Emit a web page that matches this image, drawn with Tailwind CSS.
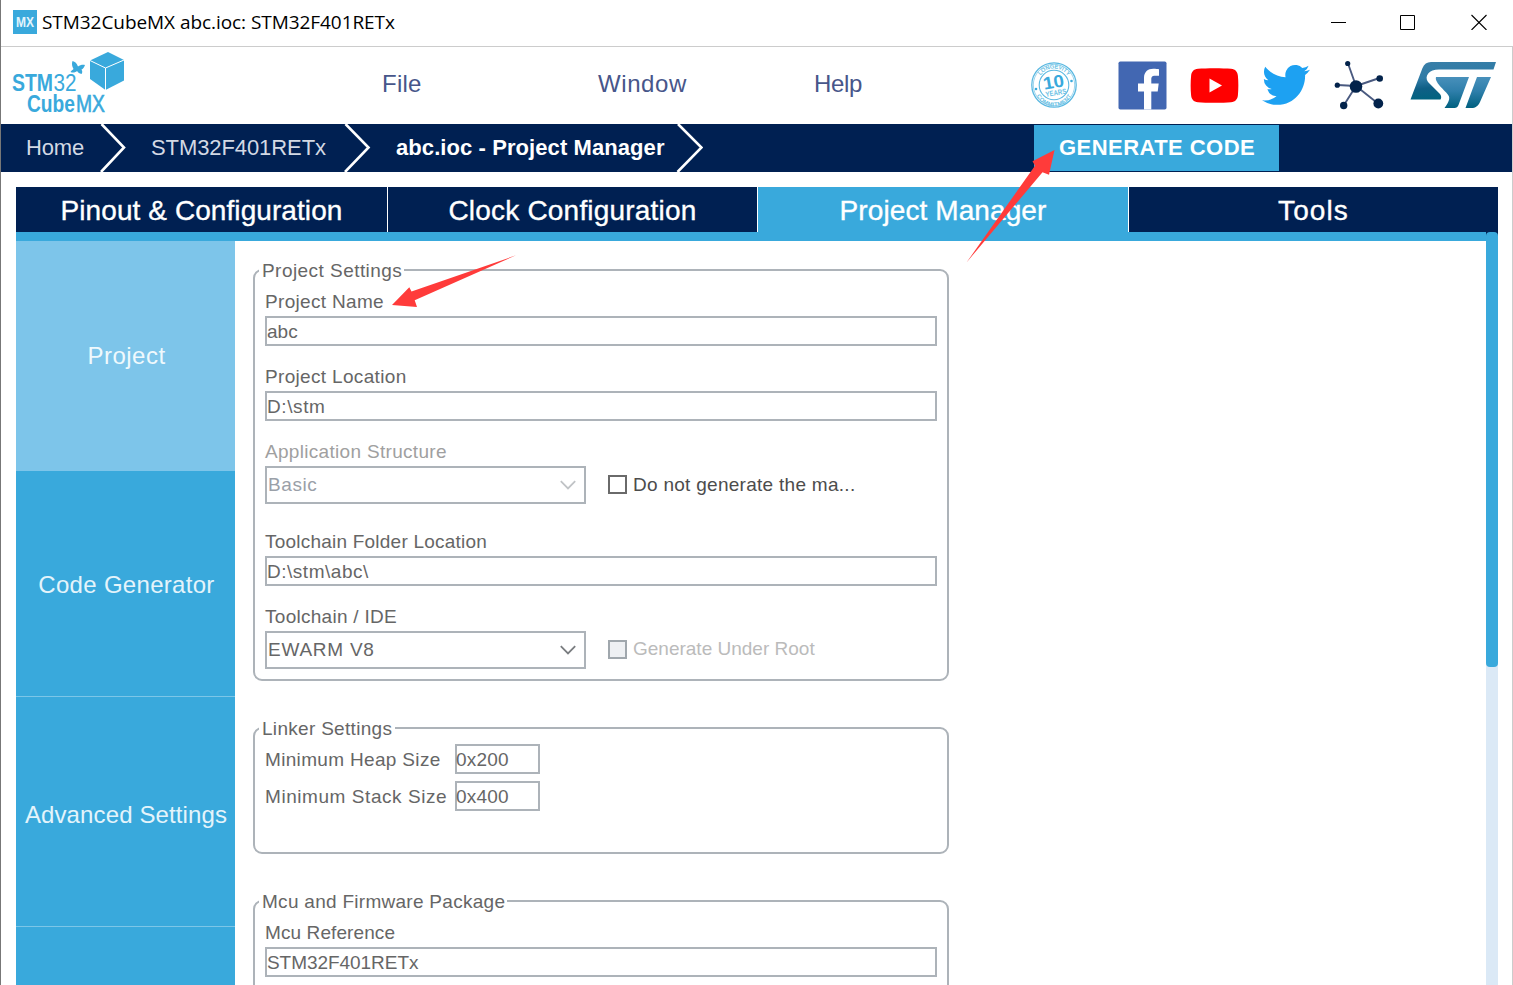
<!DOCTYPE html>
<html lang="en">
<head>
<meta charset="utf-8">
<title>STM32CubeMX</title>
<script src="https://cdn.jsdelivr.net/npm/@tailwindcss/browser@4"></script>
</head>
<body class="bg-white">
<div class="relative flex h-[985px] w-[1513px] flex-col overflow-hidden border-l border-[#777777] bg-white font-['Liberation_Sans',Arial,sans-serif] text-[#666666]">

  <!-- Window title bar -->
  <header class="flex h-[46px] shrink-0 items-center pb-[2px] pl-3">
    <div class="flex size-6 items-center justify-center bg-[#39a9dc]">
      <svg width="24" height="24" viewBox="0 0 24 24"><text x="3" y="16.500" font-size="14.500" font-weight="700" fill="#e2f4fc" textLength="18" lengthAdjust="spacingAndGlyphs">MX</text></svg>
    </div>
    <h1 class="pl-[5px] font-['Open_Sans','Noto_Sans',sans-serif] text-[19px] leading-6 tracking-[-0.06px] text-black">STM32CubeMX abc.ioc: STM32F401RETx</h1>
    <div class="ml-auto flex items-center gap-[54px] pr-[26px] text-black">
      <svg width="16" height="16" viewBox="0 0 16 16" shape-rendering="crispEdges" class="-mr-px"><path d="M0 8h15v1H0z" fill="currentColor"/></svg>
      <svg width="16" height="16" viewBox="0 0 16 16"><path d="M.5 1.500h14v14h-14z" fill="none" stroke="currentColor"/></svg>
      <svg width="16" height="16" viewBox="0 0 16 16" class="ml-px"><path d="M.5 1l15 15M15.500 1l-15 15" fill="none" stroke="currentColor" stroke-width="1.100"/></svg>
    </div>
  </header>

  <div class="flex min-h-0 flex-1 flex-col border-t border-r border-[#cccccc]">
    <!-- Application bar -->
    <div class="flex h-[77px] shrink-0">
      <svg width="120" height="77" viewBox="1 47 120 77" class="w-[120px] overflow-visible" fill="#39a9dc">
        <text x="12" y="91" font-size="24" font-weight="700" textLength="41" lengthAdjust="spacingAndGlyphs">STM</text>
        <text x="53.500" y="91" font-size="24" textLength="23" lengthAdjust="spacingAndGlyphs">32</text>
        <text x="27" y="112" font-size="24" font-weight="700" textLength="48" lengthAdjust="spacingAndGlyphs">Cube</text>
        <text x="76" y="112" font-size="24" textLength="29" lengthAdjust="spacingAndGlyphs" stroke="#39a9dc" stroke-width=".6">MX</text>
        <path d="M72.500 61C75 61.500 77 63.500 78 66.500 80 65 82.500 64.500 85 65 84 67.500 83 69 81.500 69.500 82.500 71 82.500 72.500 81.500 74 79.500 73.500 78 72.500 77 71 75.500 72.500 73 73 70.500 72 71.500 70.500 72.500 70 73.500 69 72 66.500 71.500 63.500 72.500 61Z"/>
        <path d="M90 60.500l18-8.500 16 8v20.500l-18.500 9.500L90 79z"/>
        <path d="M90 60.500l15.500 7.500 18.500-8M105.500 68v22" fill="none" stroke="#fff" stroke-width="1"/>
      </svg>
      <nav class="ml-[261px] flex text-[24px] leading-[74px] text-[#47568a]">
        <a class="w-[216px] tracking-[0.23px]">File</a>
        <a class="w-[216px] tracking-[0.59px]">Window</a>
        <a class="w-[216px] tracking-[-0.34px]">Help</a>
      </nav>
      <div class="flex flex-1 items-center pb-px">
        <!-- Longevity badge -->
        <svg width="48" height="48" viewBox="0 0 48 48">
          <defs>
            <path id="arcTop" d="M7.500 24a16.500 16.500 0 0 1 33 0"/>
            <path id="arcBottom" d="M4.500 26a19.500 19.500 0 0 0 39 0"/>
          </defs>
          <g fill="none" stroke="#5ab8e1"><circle cx="24" cy="24" r="22.200" stroke-width="1.300"/><circle cx="24" cy="24" r="20.700" stroke-width=".6"/><circle cx="24" cy="24" r="14.800" stroke-width="1.100"/></g>
          <g fill="#6abfe4" font-size="5.800" font-weight="700">
            <text><textPath href="#arcTop" startOffset="10" textLength="32">LONGEVITY</textPath></text>
            <text><textPath href="#arcBottom" startOffset="9" textLength="43">COMMITMENT</textPath></text>
          </g>
          <circle cx="6" cy="28" r="1.300" fill="#39a9dc"/><circle cx="41.500" cy="20" r="1.300" fill="#39a9dc"/>
          <g transform="rotate(-10 24 24)" fill="#39a9dc" font-weight="700"><text x="13.500" y="27" font-size="17.500" textLength="21" lengthAdjust="spacingAndGlyphs">10</text><text x="14" y="34.500" font-size="7.500" textLength="21" lengthAdjust="spacingAndGlyphs" fill="#6abfe4">YEARS</text></g>
        </svg>
        <!-- Facebook -->
        <svg width="49" height="49" viewBox="0 0 49 49" class="ml-[40px]"><rect x=".5" y=".5" width="48" height="48" rx="1.800" fill="#4267b2"/><path d="M26 48.500V30.500h-6v-8h6v-5.500c0-6 3.800-9.200 9.300-9.200 2.500 0 4.200.2 5.700.4v6.500h-4c-3 0-3.700 1.500-3.700 3.700v4.100h7.400l-1 8h-6.400v18z" fill="#fff"/></svg>
        <!-- YouTube -->
        <svg width="49" height="35" viewBox="0 0 49 35" class="ml-[23px]"><path d="M8 .8C16 0 33 0 41 .8c4.500.4 6.500 3 6.900 7 .6 6 .6 13.400 0 19.400-.4 4-2.400 6.600-6.900 7-8 .8-25 .8-33 0-4.500-.4-6.500-3-6.900-7C.5 21.200.5 13.800 1.100 7.800c.4-4 2.400-6.600 6.900-7z" fill="#f00"/><path d="M19.500 10.500v14l12.500-7z" fill="#fff"/></svg>
        <!-- Twitter -->
        <svg width="48" height="42" viewBox="0 1.800 24 20.500" preserveAspectRatio="none" class="ml-[23px]"><path fill="#1da1f2" d="M23.950 4.570a10 10 0 0 1-2.820.78 4.960 4.960 0 0 0 2.160-2.730c-.95.560-2 .96-3.130 1.180a4.920 4.920 0 0 0-8.380 4.480C7.690 8.100 4.070 6.130 1.640 3.160a4.800 4.800 0 0 0-.67 2.480c0 1.710.87 3.210 2.190 4.100a4.900 4.900 0 0 1-2.230-.62v.06a4.920 4.920 0 0 0 3.950 4.830 5 5 0 0 1-2.210.08 4.940 4.940 0 0 0 4.600 3.420A9.870 9.870 0 0 1 0 19.540a13.990 13.990 0 0 0 7.550 2.210c9.050 0 14-7.500 14-13.980 0-.21 0-.42-.02-.63a9.940 9.940 0 0 0 2.460-2.550z"/></svg>
        <!-- Community network -->
        <svg width="50" height="50" viewBox="0 0 50 50" class="ml-[24px]" fill="#03234b"><g stroke="#4a5a80" stroke-width="1.900"><path d="M22 26L14 3.500M22 26L3.500 25M22 26l23.500-8M22 26L10 45M22 26l22 17.500"/></g><circle cx="22" cy="26.500" r="6.300"/><circle cx="13.700" cy="3.500" r="2.600"/><circle cx="3.300" cy="25.200" r="2.600"/><circle cx="45.700" cy="18.500" r="3.300"/><circle cx="9.700" cy="45.500" r="3.700"/><circle cx="44.300" cy="43.500" r="4.900"/></svg>
        <!-- ST logo -->
        <svg width="87" height="48" viewBox="0 0 87 48" class="ml-[26px]">
          <defs><linearGradient id="st" x1="0" y1="0" x2=".25" y2="1"><stop offset="0" stop-color="#3a7fa8"/><stop offset=".45" stop-color="#2f7ba6"/><stop offset=".7" stop-color="#0f5f86"/><stop offset="1" stop-color="#00637f"/></linearGradient>
          <linearGradient id="st2" x1="0" y1="0" x2="0" y2="1"><stop offset="0" stop-color="#4890bb"/><stop offset=".45" stop-color="#2f7fab"/><stop offset="1" stop-color="#00607f"/></linearGradient></defs>
          <path d="M21 1h65l-2.500 7.500H29C19 8.500 14 15 18 21l12 12c1.500 2 1.500 4 .5 5.500H.5L12.500 7C14 3 17 1 21 1z" fill="url(#st)"/>
          <path d="M26 16h33L48.500 44c-.7 2-2 3-4 3H34.500c3-4 5.500-8 4.500-11.500C38 31.500 24 22 26 16zM67 16h14L70 41c-2 4.200-4.500 6-8.500 6H55.500z" fill="url(#st2)"/>
        </svg>
      </div>
    </div>

    <!-- Breadcrumb -->
    <div class="flex h-12 shrink-0 items-center bg-[#002052] text-[22px] text-[#d3d9e4]">
      <a class="w-[98px] pb-px pl-[25px] leading-[46px] tracking-[-0.15px]">Home</a>
      <svg width="28" height="48" viewBox="0 0 28 48"><path d="M2.500 0L25 23.500 2 48" fill="none" stroke="#fff" stroke-width="2.600"/></svg>
      <a class="w-[216px] pb-px pl-6 leading-[46px] tracking-[-0.09px]">STM32F401RETx</a>
      <svg width="28" height="48" viewBox="0 0 28 48"><path d="M2.500 0L25.500 23.500 2 48" fill="none" stroke="#fff" stroke-width="2.600"/></svg>
      <a class="w-[304px] pb-px pl-[25px] leading-[46px] font-bold tracking-[0.08px] text-white">abc.ioc - Project Manager</a>
      <svg width="28" height="48" viewBox="0 0 28 48"><path d="M3 0L26.500 23.500 2.500 48" fill="none" stroke="#fff" stroke-width="2.600"/></svg>
      <button class="ml-[331px] h-[46px] w-[245px] bg-[#39a9dc] pb-px pl-[3px] text-left font-bold tracking-[0.45px] text-white"><span class="pl-[22px]">GENERATE CODE</span></button>
    </div>

    <!-- Main tabs -->
    <div class="mt-[15px] ml-[15px] flex h-[45px] w-[1482px] shrink-0 text-center text-[28px] leading-[47px] text-white [-webkit-text-stroke:0.35px_white]">
      <div class="w-[372px] border-r border-white bg-[#002052] tracking-[0.08px]">Pinout &amp; Configuration</div>
      <div class="w-[370px] border-r border-white bg-[#002052] tracking-[0.2px]">Clock Configuration</div>
      <div class="w-[371px] border-r border-white bg-[#39a9dc] tracking-[0.1px]">Project Manager</div>
      <div class="flex-1 bg-[#002052] tracking-[1.1px]">Tools</div>
    </div>

    <div class="ml-[15px] flex min-h-0 w-[1482px] flex-1">
      <div class="flex min-w-0 flex-1 flex-col border-t-9 border-[#39a9dc]">
        <div class="flex min-h-0 flex-1">
          <!-- Section list -->
          <nav class="flex w-[219px] shrink-0 flex-col bg-[#39a9dc] text-center text-[24px] text-[#e4f4fb]">
            <a class="flex h-[230px] shrink-0 items-center justify-center bg-[#7dc5ea] pl-[2px] tracking-[0.5px] text-[#eff9fd]">Project</a>
            <a class="flex h-[226px] shrink-0 items-center justify-center border-b border-[#7cc6e8] pt-[3px] pl-[2px] tracking-[0.3px]">Code Generator</a>
            <a class="flex h-[230px] shrink-0 items-center justify-center border-b border-[#7cc6e8] pt-[6px] pl-px tracking-[0.12px]">Advanced Settings</a>
          </nav>

          <!-- Project form -->
          <main class="flex w-[714px] flex-col pt-[17px] pl-[18px] text-[19px]">
            <fieldset class="h-[423px] shrink-0 rounded-[9px] border-2 border-[#adb3b9] pt-1 pl-[10px]">
              <legend class="-ml-[6px] h-6 pr-[2px] pl-[3px] leading-[26px] tracking-[0.45px]">Project Settings</legend>
              <label class="block h-[30px] leading-[32px] tracking-[0.32px]">Project Name</label>
              <div class="h-[30px] w-[672px] border-2 border-[#adb3b9] leading-[27px]">abc</div>
              <label class="mt-[15px] block h-[30px] leading-[32px] tracking-[0.33px]">Project Location</label>
              <div class="h-[30px] w-[672px] border-2 border-[#adb3b9] leading-[27px] tracking-[0.6px]">D:\stm</div>
              <label class="mt-[15px] block h-[30px] leading-[32px] tracking-[0.31px] text-[#a0a0a0]">Application Structure</label>
              <div class="flex items-center">
                <div class="flex h-[38px] w-[321px] items-center justify-between border-2 border-[#adb3b9] pr-2 pl-px tracking-[0.6px] text-[#9aa0a8]"><span class="pt-px">Basic</span>
                  <svg width="16" height="10" viewBox="0 0 16 10"><path d="M.8 1.200L8 8.400l7.200-7.200" fill="none" stroke="#c0c3c6" stroke-width="1.800"/></svg></div>
                <span class="-mt-0.5 ml-[22px] size-[19px] border-2 border-[#6a6a6a]"></span>
                <span class="ml-[6px] tracking-[0.28px] text-[#4c4c4c]">Do not generate the ma...</span>
              </div>
              <label class="mt-[22px] block h-[30px] leading-[32px] tracking-[0.22px]">Toolchain Folder Location</label>
              <div class="h-[30px] w-[672px] border-2 border-[#adb3b9] leading-[27px] tracking-[0.52px]">D:\stm\abc\</div>
              <label class="mt-[15px] block h-[30px] leading-[32px] tracking-[0.28px]">Toolchain / IDE</label>
              <div class="flex items-center">
                <div class="flex h-[38px] w-[321px] items-center justify-between border-2 border-[#adb3b9] pr-2 pl-px tracking-[0.75px]"><span class="pt-px">EWARM V8</span>
                  <svg width="16" height="10" viewBox="0 0 16 10"><path d="M.8 1.200L8 8.400l7.200-7.200" fill="none" stroke="#7a7d80" stroke-width="1.800"/></svg></div>
                <span class="-mt-0.5 ml-[22px] size-[19px] border-2 border-[#a0a7ad] bg-[#eef0f3]"></span>
                <span class="-mt-0.5 ml-[6px] text-[#bbbbbb]">Generate Under Root</span>
              </div>
            </fieldset>

            <fieldset class="mt-[35px] h-[138px] shrink-0 rounded-[9px] border-2 border-[#adb3b9] pt-1 pl-[10px]">
              <legend class="-ml-[6px] h-6 pr-[3px] pl-[3px] leading-[25px] tracking-[0.3px]">Linker Settings</legend>
              <div class="flex h-[30px] items-center"><label class="w-[190px] pt-[2px] tracking-[0.33px]">Minimum Heap Size</label><div class="h-[30px] w-[85px] border-2 border-[#adb3b9] leading-[27px] tracking-[0.2px]"><span class="-ml-px">0x200</span></div></div>
              <div class="mt-[7px] flex h-[30px] items-center"><label class="w-[190px] pt-[2px] tracking-[0.56px]">Minimum Stack Size</label><div class="h-[30px] w-[85px] border-2 border-[#adb3b9] leading-[27px] tracking-[0.2px]"><span class="-ml-px">0x400</span></div></div>
            </fieldset>

            <fieldset class="mt-[35px] h-[300px] shrink-0 rounded-[9px] border-2 border-[#adb3b9] pt-1 pl-[10px]">
              <legend class="-ml-[6px] h-6 pr-[2px] pl-[3px] leading-[25px] tracking-[0.28px]">Mcu and Firmware Package</legend>
              <label class="block h-[30px] leading-[31px] tracking-[0.1px]">Mcu Reference</label>
              <div class="h-[30px] w-[672px] border-2 border-[#adb3b9] leading-[27px] tracking-[-0.05px]">STM32F401RETx</div>
            </fieldset>
          </main>
        </div>
      </div>
      <!-- Vertical scrollbar -->
      <div class="w-3 shrink-0 bg-[linear-gradient(#002052_4px,#dbe9f6_4px)]"><div class="h-[435px] rounded-[4px] bg-[#39a9dc]"></div></div>
    </div>
  </div>

  <!-- Annotation arrows -->
  <svg width="1513" height="985" viewBox="0 0 1513 985" class="pointer-events-none absolute top-0 -left-px" fill="#ff3b3a">
    <path d="M392 305l17.300-17.700 2.200 4.200L516 255.300 414.700 300.300l2.300 6.700z"/>
    <path d="M1054.500 150l-5.500 24.800-6.500-2.600L966.500 262.500l68.500-96.800-2.500-4.500z"/>
  </svg>
</div>
</body>
</html>
